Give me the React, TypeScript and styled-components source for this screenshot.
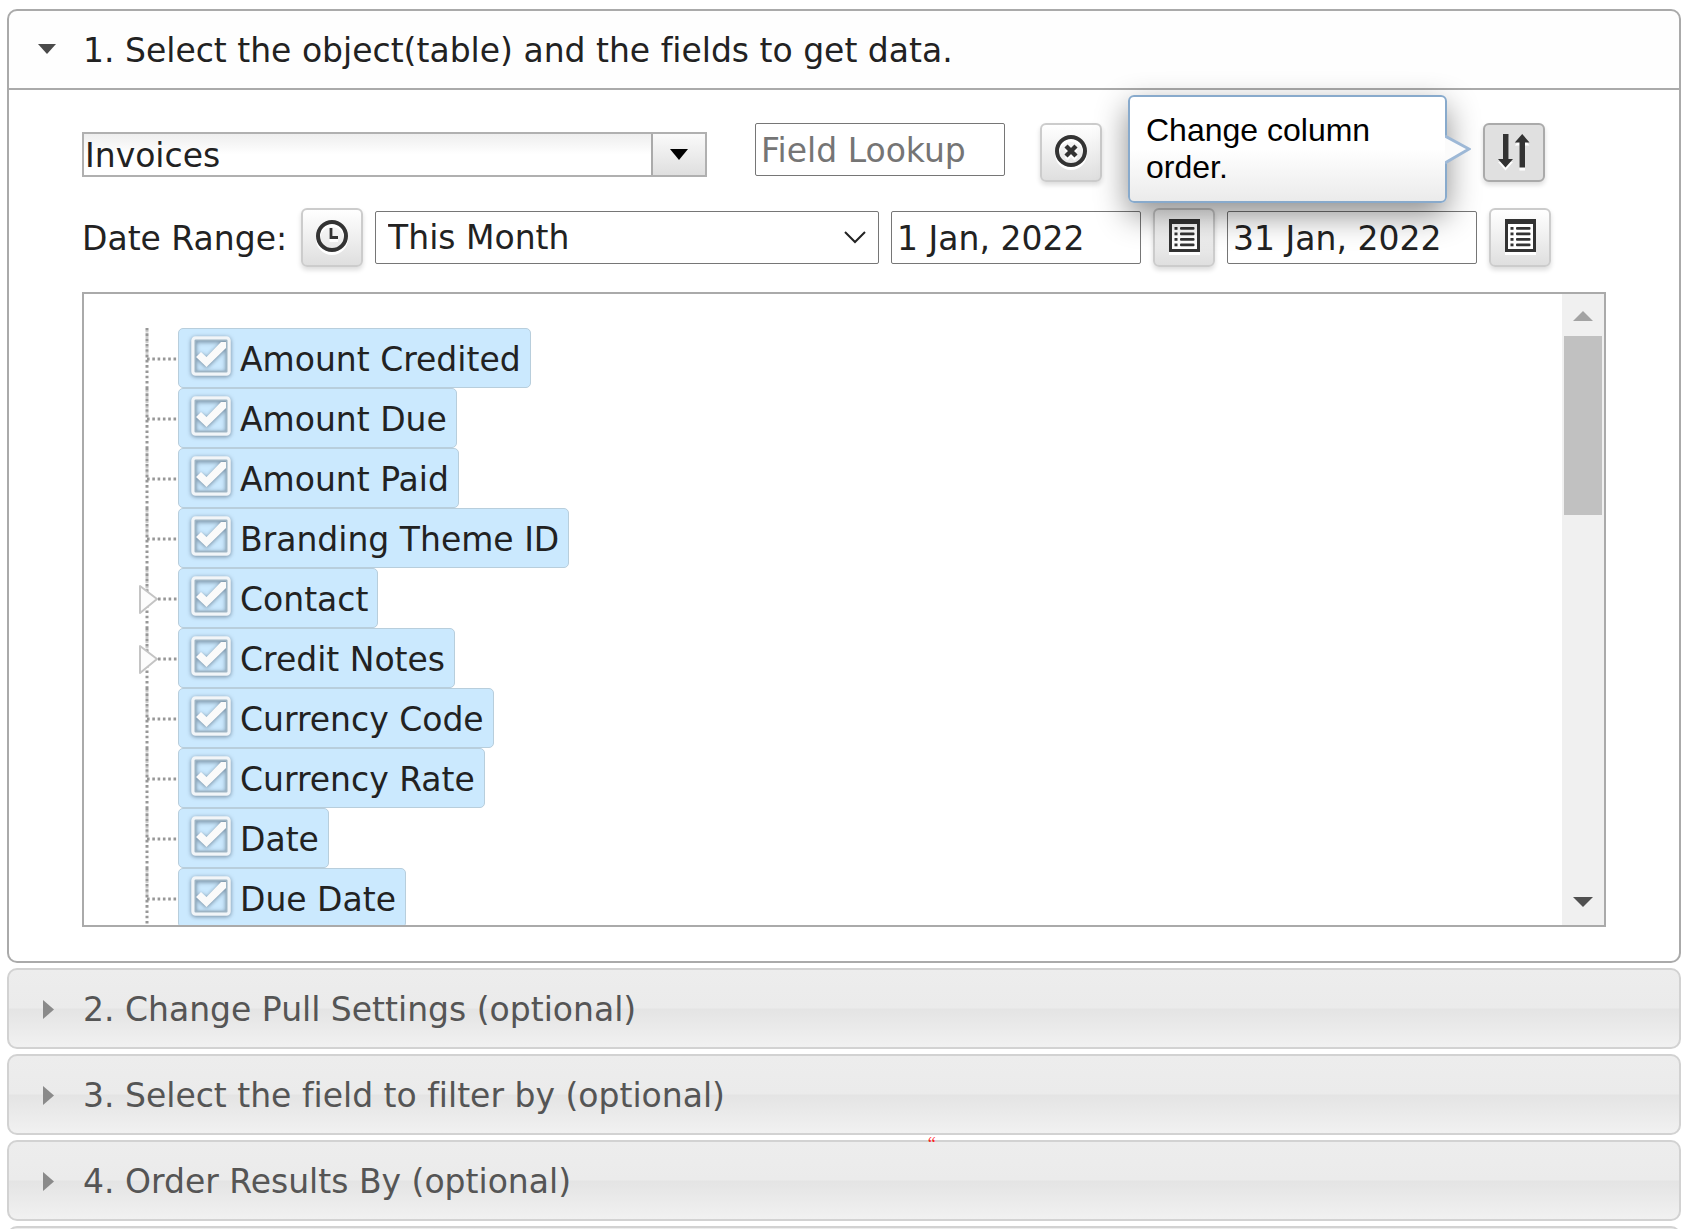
import React, { useState } from "react";
import styled, { createGlobalStyle, css } from "styled-components";

const GlobalStyle = createGlobalStyle`
  *, *::before, *::after { box-sizing: border-box; }
  body {
    margin: 0;
    background: #ffffff;
    font-family: "DejaVu Sans", Verdana, sans-serif;
    font-size: 33px;
    line-height: 40px;
    font-variant-ligatures: none;
    color: #222222;
  }
  button, input, select { font: inherit; color: inherit; margin: 0; }
`;

const Page = styled.main`
  display: flex;
  flex-direction: column;
  gap: 5px;
  height: 100vh;
  padding: 9px 11px 0 7px;
  overflow: hidden;
`;

const Section = styled.section`
  flex: none;
  position: relative;
`;

const Heading = styled.h3`
  margin: 0;
  font-size: inherit;
  font-weight: normal;
`;

const HeaderButton = styled.button<{ $open?: boolean }>`
  display: grid;
  grid-template-columns: 47px 1fr;
  align-items: center;
  width: 100%;
  height: 81px;
  padding: 0 27px;
  border: 2px solid #d2d2d2;
  border-radius: 10px;
  background: linear-gradient(#ededed 0%, #ebebeb 49%, #e4e4e4 51%, #f1f1f1 100%);
  color: #555555;
  text-align: left;
  font-variant-ligatures: none;
  ${(p) =>
    p.$open &&
    css`
      border-color: #aaaaaa;
      border-radius: 10px 10px 0 0;
      background: #fefefe;
      color: #222222;
    `}
`;

const HeaderText = styled.span`
  padding-top: 2px;
`;

const SectionBody = styled.div`
  padding: 33px 73px 34px;
  border: 2px solid #aaaaaa;
  border-top: 0;
  border-radius: 0 0 10px 10px;
  background: #ffffff;
`;

const LookupRow = styled.div`
  display: flex;
  align-items: flex-start;
  padding-right: 61px;
`;

const ComboBox = styled.div`
  display: flex;
  width: 625px;
  height: 45px;
  margin: 9px 48px 0 0;
  border: 2px solid #b0b0b0;
`;

const ComboInput = styled.input`
  flex: 1;
  min-width: 0;
  padding: 2px 1px 0;
  border: 0;
  outline: 0;
  background: linear-gradient(#eeeeee, #ffffff 50%);
`;

const ComboTrigger = styled.button`
  display: grid;
  place-items: center;
  width: 54px;
  padding: 0;
  border: 0;
  border-left: 2px solid #aaaaaa;
  background: linear-gradient(#fafafa, #dfdfdf);
`;

const TextField = styled.input`
  width: 250px;
  height: 53px;
  padding: 1px 5px 0;
  border: 1px solid #767676;
  border-radius: 2px;
  background: #ffffff;
  &::placeholder {
    color: #757575;
    opacity: 1;
  }
`;

const IconButton = styled.button<{ $active?: boolean }>`
  display: grid;
  place-items: center;
  flex: none;
  width: 62px;
  height: 59px;
  padding: 0 0 4px;
  border: 2px solid ${(p) => (p.$active ? "#aaaaaa" : "#cccccc")};
  border-radius: 6px;
  background: ${(p) => (p.$active ? "#e0e0e0" : "linear-gradient(#ffffff, #dfdfdf)")};
  box-shadow: 0 3px 5px rgba(0, 0, 0, 0.14);
  svg {
    display: block;
    filter: drop-shadow(0 3px 0 #ffffff);
  }
`;

const ClearSlot = styled.div`
  margin-left: 35px;
`;

const SortSlot = styled.div`
  position: relative;
  margin-left: auto;
`;

const Tooltip = styled.div`
  position: absolute;
  z-index: 2;
  top: -28px;
  right: calc(100% + 36px);
  width: 319px;
  padding: 15px 16px;
  border: 2px solid #88aacc;
  border-radius: 6px;
  background: linear-gradient(#ffffff 50%, #ebebeb);
  box-shadow: 0 12px 32px rgba(0, 0, 0, 0.45);
  color: #000000;
  font-family: "Liberation Sans", Arial, sans-serif;
  font-size: 32px;
  line-height: 37px;
`;

const TooltipArrow = styled.svg`
  position: absolute;
  top: 35px;
  left: 100%;
`;

const DateRow = styled.div`
  display: flex;
  align-items: center;
  gap: 12px;
  margin: 26px 0 25px;
`;

const DateLabel = styled.label`
  margin-right: 2px;
  padding-top: 3px;
  white-space: nowrap;
`;

const SelectWrap = styled.div`
  display: grid;
  align-items: center;
  width: 504px;
  > * {
    grid-area: 1 / 1;
  }
  svg {
    justify-self: end;
    margin-right: 13px;
    pointer-events: none;
  }
`;

const RangeSelect = styled.select`
  appearance: none;
  width: 100%;
  height: 53px;
  padding: 1px 12px 0;
  border: 1px solid #767676;
  border-radius: 2px;
  background: #ffffff;
`;

const FieldBox = styled.div`
  display: flex;
  height: 635px;
  border: 2px solid #aaaaaa;
  overflow: hidden;
`;

const Tree = styled.ul`
  flex: 1;
  margin: 0;
  padding: 34px 0 0 54px;
  list-style: none;
`;

const TreeItem = styled.li`
  display: flex;
  height: 60px;
`;

const Guide = styled.svg`
  flex: none;
  width: 40px;
  height: 60px;
`;

const Node = styled.label`
  display: flex;
  align-items: center;
  gap: 8px;
  height: 60px;
  padding: 0 9px 0 11px;
  border: 1px solid #b8cedc;
  border-radius: 5px;
  background: #cbe9fe;
  white-space: nowrap;
`;

const Check = styled.span`
  display: grid;
  width: 42px;
  height: 42px;
  margin-bottom: 4px;
  > * {
    grid-area: 1 / 1;
  }
`;

const CheckInput = styled.input`
  appearance: none;
  width: 42px;
  height: 42px;
  & + svg path {
    visibility: hidden;
  }
  &:checked + svg path {
    visibility: visible;
  }
`;

const CheckArt = styled.svg`
  pointer-events: none;
  filter: drop-shadow(0 1px 2px rgba(50, 70, 90, 0.6));
`;

const NodeText = styled.span`
  padding-top: 3px;
`;

const ScrollBar = styled.div`
  display: flex;
  flex-direction: column;
  align-items: center;
  width: 42px;
  padding: 17px 2px 18px;
  background: #f0f0f0;
`;

const ScrollThumb = styled.div`
  width: 100%;
  height: 179px;
  margin: 15px 0 auto;
  background: #c1c1c1;
`;

const Mark = styled.span`
  position: absolute;
  top: 0;
  left: 55%;
  color: #ff2020;
  font-family: "Liberation Serif", "Times New Roman", serif;
  font-size: 18px;
  line-height: 8px;
`;

const Triangle = ({ points, fill, w, h }: { points: string; fill: string; w: number; h: number }) => (
  <svg width={w} height={h} viewBox={`0 0 ${w} ${h}`} aria-hidden="true">
    <polygon points={points} fill={fill} />
  </svg>
);

const HeaderArrow = ({ open }: { open?: boolean }) => (
  <svg width="22" height="22" viewBox="0 0 22 22" aria-hidden="true">
    {open ? <path d="M2 5h18l-9 10z" fill="#4a4a4a" /> : <path d="M7 2v19l11-9.5z" fill="#8a8a8a" />}
  </svg>
);

const CloseIcon = () => (
  <svg width="34" height="34" viewBox="0 0 34 34" fill="none" stroke="#333">
    <circle cx="17" cy="17" r="14" strokeWidth="4" />
    <path d="M12 12l10 10M22 12l-10 10" strokeWidth="4.4" />
  </svg>
);

const ClockIcon = () => (
  <svg width="34" height="34" viewBox="0 0 34 34" fill="none" stroke="#333">
    <circle cx="17" cy="17" r="14" strokeWidth="4" />
    <path d="M16 9v9.5h7" strokeWidth="2.8" />
  </svg>
);

const SortIcon = () => (
  <svg width="34" height="34" viewBox="0 0 34 34" fill="#333">
    <path d="M6 0h5.5v25H16l-7.500 8.500L1 25h5z" />
    <path d="M22.500 33.500H28V8.500h4.500L25.200 0l-7.400 8.500h4.700z" />
  </svg>
);

const ListIcon = () => (
  <svg width="31" height="33" viewBox="0 0 31 33">
    <rect width="31" height="33" fill="#333" />
    <rect x="3" y="5" width="25" height="25" fill="#fff" />
    <g fill="#333">
      {[8, 13.5, 19, 24.5].map((y) => (
        <React.Fragment key={y}>
          <rect x="5.5" y={y} width="3" height="2.8" />
          <rect x="11" y={y} width="14.5" height="2.8" rx="1" />
        </React.Fragment>
      ))}
    </g>
  </svg>
);

const CheckDrawing = () => (
  <CheckArt width="42" height="42" viewBox="0 0 42 42" fill="none" aria-hidden="true">
    <rect x="3" y="3" width="36" height="36" rx="2.5" stroke="#f1f5f8" strokeWidth="3.5" />
    <rect x="5.5" y="5.5" width="31" height="31" stroke="#9db4c4" strokeWidth="1.5" />
    <path d="M6 22l5-5 5.500 5L31 7h5v6L16.500 32z" fill="#fafafa" />
  </CheckArt>
);

const GuideLines = ({ parent }: { parent?: boolean }) => (
  <Guide viewBox="0 0 40 60" fill="none" stroke="#979797" strokeWidth="3" aria-hidden="true">
    <path d="M9 0V60" strokeDasharray="2.6 2.700" />
    <path d="M9 2.600V30" strokeDasharray="2 3.300" strokeOpacity=".5" />
    <path d={parent ? "M20 31H40" : "M9 31H40"} strokeDasharray="2.6 2.700" />
    {parent && <path d="M2 18v27l17-14z" fill="#fcfcfc" stroke="#c4c4c4" strokeWidth="2" strokeLinejoin="round" />}
  </Guide>
);

const fields = [
  { name: "Amount Credited" },
  { name: "Amount Due" },
  { name: "Amount Paid" },
  { name: "Branding Theme ID" },
  { name: "Contact", parent: true },
  { name: "Credit Notes", parent: true },
  { name: "Currency Code" },
  { name: "Currency Rate" },
  { name: "Date" },
  { name: "Due Date" },
];

const CollapsedSection = ({ title, children }: { title?: string; children?: React.ReactNode }) => (
  <Section>
    <Heading>
      <HeaderButton type="button" aria-expanded="false">
        <HeaderArrow />
        <HeaderText>{title}</HeaderText>
      </HeaderButton>
    </Heading>
    {children}
  </Section>
);

export default function App() {
  const [source, setSource] = useState("Invoices");
  return (
    <>
      <GlobalStyle />
      <Page>
        <Section>
          <Heading>
            <HeaderButton type="button" aria-expanded="true" $open>
              <HeaderArrow open />
              <HeaderText>1. Select the object(table) and the fields to get data.</HeaderText>
            </HeaderButton>
          </Heading>
          <SectionBody>
            <LookupRow>
              <ComboBox>
                <ComboInput aria-label="Object" value={source} onChange={(e) => setSource(e.target.value)} />
                <ComboTrigger type="button" aria-label="Show objects">
                  <Triangle points="0,0 18,0 9,11" fill="#000" w={18} h={11} />
                </ComboTrigger>
              </ComboBox>
              <TextField aria-label="Field Lookup" placeholder="Field Lookup" />
              <ClearSlot>
                <IconButton type="button" aria-label="Clear lookup">
                  <CloseIcon />
                </IconButton>
              </ClearSlot>
              <SortSlot>
                <IconButton type="button" $active aria-label="Sort columns" aria-describedby="order-tip">
                  <SortIcon />
                </IconButton>
                <Tooltip id="order-tip" role="tooltip">
                  Change column order.
                  <TooltipArrow width="26" height="34" viewBox="0 0 26 34" aria-hidden="true">
                    <path d="M0 4L24 17 0 31z" fill="#fbfbfb" />
                    <path d="M0 4L24 17 0 31" fill="none" stroke="#9db8d6" strokeWidth="3" />
                  </TooltipArrow>
                </Tooltip>
              </SortSlot>
            </LookupRow>
            <DateRow>
              <DateLabel htmlFor="range">Date Range:</DateLabel>
              <IconButton type="button" aria-label="Time">
                <ClockIcon />
              </IconButton>
              <SelectWrap>
                <RangeSelect id="range" defaultValue="This Month">
                  <option>This Month</option>
                </RangeSelect>
                <svg width="22" height="13" viewBox="0 0 22 13" fill="none" stroke="#222" strokeWidth="2">
                  <path d="M1 1l10 10L21 1" />
                </svg>
              </SelectWrap>
              <TextField aria-label="Start date" defaultValue="1 Jan, 2022" />
              <IconButton type="button" aria-label="Pick start date">
                <ListIcon />
              </IconButton>
              <TextField aria-label="End date" defaultValue="31 Jan, 2022" />
              <IconButton type="button" aria-label="Pick end date">
                <ListIcon />
              </IconButton>
            </DateRow>
            <FieldBox>
              <Tree>
                {fields.map((f) => (
                  <TreeItem key={f.name}>
                    <GuideLines parent={f.parent} />
                    <Node>
                      <Check>
                        <CheckInput type="checkbox" defaultChecked />
                        <CheckDrawing />
                      </Check>
                      <NodeText>{f.name}</NodeText>
                    </Node>
                  </TreeItem>
                ))}
              </Tree>
              <ScrollBar aria-hidden="true">
                <Triangle points="0,10 20,10 10,0" fill="#a3a3a3" w={20} h={10} />
                <ScrollThumb />
                <Triangle points="0,0 20,0 10,10" fill="#505050" w={20} h={10} />
              </ScrollBar>
            </FieldBox>
          </SectionBody>
        </Section>
        <CollapsedSection title="2. Change Pull Settings (optional)" />
        <CollapsedSection title="3. Select the field to filter by (optional)" />
        <CollapsedSection title="4. Order Results By (optional)">
          <Mark>“</Mark>
        </CollapsedSection>
        <CollapsedSection />
      </Page>
    </>
  );
}
